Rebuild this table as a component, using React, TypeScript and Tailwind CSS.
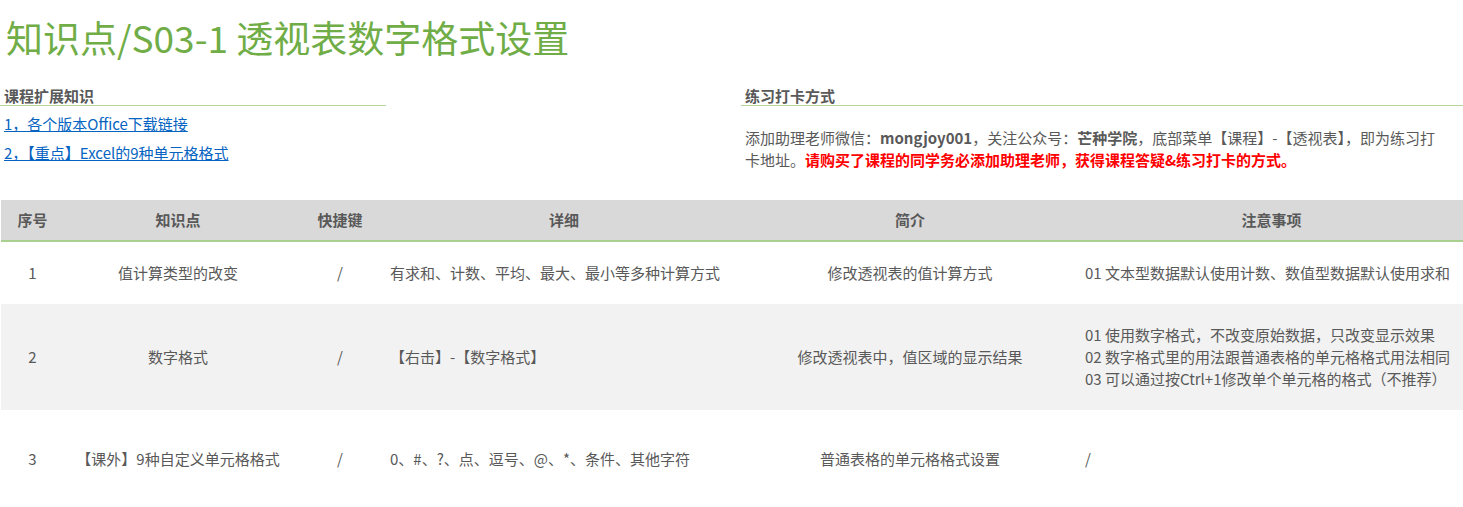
import React from "react";

const rows = [
  {
    no: "1",
    point: "值计算类型的改变",
    key: "/",
    detail: "有求和、计数、平均、最大、最小等多种计算方式",
    intro: "修改透视表的值计算方式",
    notes: ["01 文本型数据默认使用计数、数值型数据默认使用求和"],
    bg: "bg-white",
    pad: "py-[20px]",
  },
  {
    no: "2",
    point: "数字格式",
    key: "/",
    detail: "【右击】-【数字格式】",
    intro: "修改透视表中，值区域的显示结果",
    notes: [
      "01 使用数字格式，不改变原始数据，只改变显示效果",
      "02 数字格式里的用法跟普通表格的单元格格式用法相同",
      "03 可以通过按Ctrl+1修改单个单元格的格式（不推荐）",
    ],
    bg: "bg-[#f2f2f2]",
    pad: "py-[20px]",
  },
  {
    no: "3",
    point: "【课外】9种自定义单元格格式",
    key: "/",
    detail: "0、#、?、点、逗号、@、*、条件、其他字符",
    intro: "普通表格的单元格格式设置",
    notes: ["/"],
    bg: "bg-white",
    pad: "py-[38px]",
  },
];

export default function App() {
  return (
    <div
      className="w-[1463px] h-[507px] overflow-hidden bg-white text-[#595959] text-[15px]"
      style={{ fontFamily: '"Noto Sans CJK SC", "Noto Sans", sans-serif' }}
    >
      <h1 className="pt-[10px] pl-[6px] text-[37px] leading-[55px] font-normal text-[#70ad47]">
        知识点/S03-1 透视表数字格式设置
      </h1>

      <div className="flex mt-[21px]">
        <div className="w-[386px]">
          <div className="pl-[4px] font-bold leading-[19px] border-b border-[#b4d59c]">
            课程扩展知识
          </div>
          <div className="flex flex-col gap-[7px] mt-[7px] pl-[4px] leading-[22px]">
            <a href="#" className="text-[#0563c1] underline w-fit">
              1，各个版本Office下载链接
            </a>
            <a href="#" className="text-[#0563c1] underline w-fit">
              2，【重点】Excel的9种单元格格式
            </a>
          </div>
        </div>
        <div className="ml-[355px] flex-1">
          <div className="pl-[4px] font-bold leading-[19px] border-b border-[#b4d59c]">
            练习打卡方式
          </div>
          <p className="mt-[21px] pl-[4px] pr-[14px] leading-[22px]">
            添加助理老师微信：<b>mongjoy001</b>，关注公众号：<b>芒种学院</b>，底部菜单【课程】-【透视表】，即为练习打
            <br />
            卡地址。
            <span className="text-[#ff0000] font-bold">
              请购买了课程的同学务必添加助理老师，获得课程答疑&amp;练习打卡的方式。
            </span>
          </p>
        </div>
      </div>

      <table className="mt-[29px] ml-px w-[1462px] table-fixed border-collapse leading-[22px]">
        <colgroup>
          <col className="w-[63px]" />
          <col className="w-[228px]" />
          <col className="w-[96px]" />
          <col className="w-[352px]" />
          <col className="w-[340px]" />
          <col className="w-[383px]" />
        </colgroup>
        <thead>
          <tr className="bg-[#d9d9d9] h-[41px] border-b-2 border-[#a9d08e]">
            <th className="font-bold text-center">序号</th>
            <th className="font-bold text-center">知识点</th>
            <th className="font-bold text-center">快捷键</th>
            <th className="font-bold text-center">详细</th>
            <th className="font-bold text-center">简介</th>
            <th className="font-bold text-center">注意事项</th>
          </tr>
        </thead>
        <tbody>
          {rows.map((r) => (
            <tr key={r.no} className={r.bg}>
              <td className={`${r.pad} text-center`}>{r.no}</td>
              <td className={`${r.pad} text-center`}>{r.point}</td>
              <td className={`${r.pad} text-center`}>{r.key}</td>
              <td className={`${r.pad} pl-[2px] text-left whitespace-nowrap`}>{r.detail}</td>
              <td className={`${r.pad} text-center`}>{r.intro}</td>
              <td className={`${r.pad} pl-[5px] text-left whitespace-nowrap`}>
                {r.notes.map((n) => (
                  <div key={n}>{n}</div>
                ))}
              </td>
            </tr>
          ))}
        </tbody>
      </table>
    </div>
  );
}
